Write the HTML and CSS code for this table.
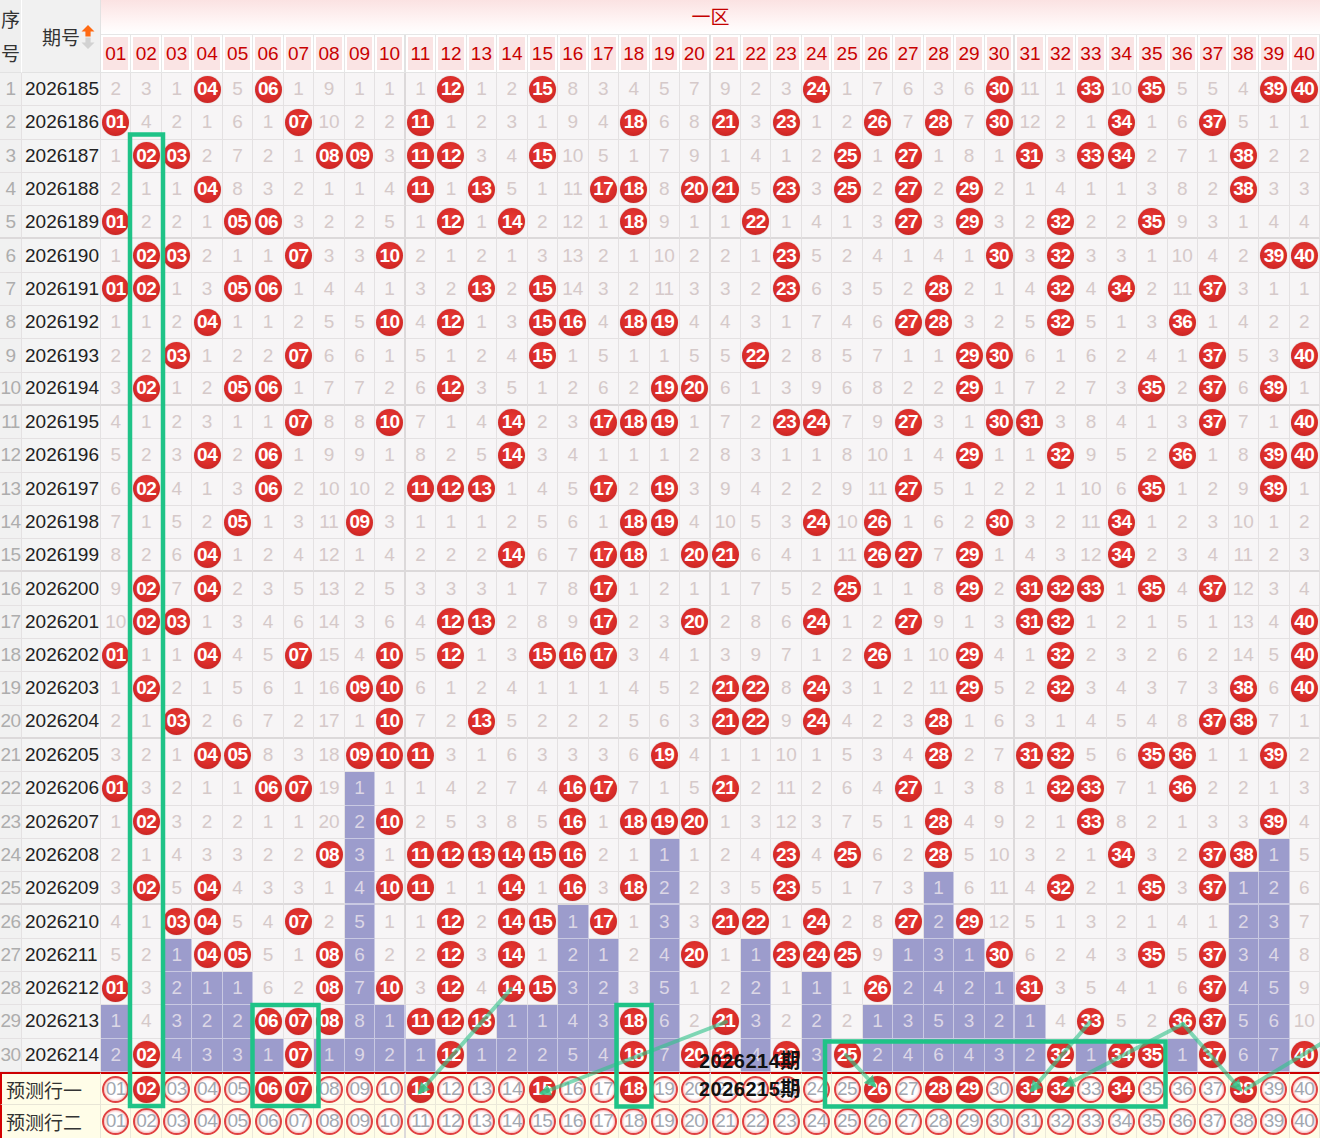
FILE: index.html
```html
<!DOCTYPE html>
<html lang="zh-CN">
<head>
<meta charset="utf-8">
<title>一区走势图</title>
<link rel="stylesheet" href="styles.css">
</head>
<body>
<div class="chart-wrap">
  <div class="chart" id="chart">
    <div class="h-seq"><span>序</span><span>号</span></div>
    <div class="h-issue">
      <span>期号</span>
      <svg class="sort-icon" width="14" height="24" viewBox="0 0 14 24" aria-hidden="true">
        <path d="M7 0 L13.5 6.5 L9.6 6.5 L9.6 11.5 L4.4 11.5 L4.4 6.5 L0.5 6.5 Z" fill="#ff6a13"/>
        <path d="M4.4 12.5 L9.6 12.5 L9.6 17.5 L13.5 17.5 L7 24 L0.5 17.5 L4.4 17.5 Z" fill="#d2d2d2"/>
      </svg>
    </div>
    <div class="h-zone">一区</div>
    <div class="hnum">01</div><div class="hnum">02</div><div class="hnum">03</div><div class="hnum">04</div><div class="hnum">05</div>
    <div class="hnum">06</div><div class="hnum">07</div><div class="hnum">08</div><div class="hnum">09</div><div class="hnum gsep">10</div>
    <div class="hnum">11</div><div class="hnum">12</div><div class="hnum">13</div><div class="hnum">14</div><div class="hnum">15</div>
    <div class="hnum">16</div><div class="hnum">17</div><div class="hnum">18</div><div class="hnum">19</div><div class="hnum gsep">20</div>
    <div class="hnum">21</div><div class="hnum">22</div><div class="hnum">23</div><div class="hnum">24</div><div class="hnum">25</div>
    <div class="hnum">26</div><div class="hnum">27</div><div class="hnum">28</div><div class="hnum">29</div><div class="hnum gsep">30</div>
    <div class="hnum">31</div><div class="hnum">32</div><div class="hnum">33</div><div class="hnum">34</div><div class="hnum">35</div>
    <div class="hnum">36</div><div class="hnum">37</div><div class="hnum">38</div><div class="hnum">39</div><div class="hnum">40</div>
  </div>

  <svg class="overlay" width="1320" height="1138" viewBox="0 0 1320 1138" aria-hidden="true">
    <defs>
      <marker id="ah" viewBox="0 0 10 10" refX="7" refY="5" markerWidth="3" markerHeight="3" orient="auto">
        <path d="M0,0 L10,5 L0,10 Z" fill="rgba(52,196,138,0.8)"/>
      </marker>
    </defs>
    <g class="trend">
      <line x1="511" y1="989" x2="420" y2="1092" marker-end="url(#ah)"/>
      <line x1="726" y1="1022" x2="542" y2="1093" marker-end="url(#ah)"/>
      <line x1="846" y1="1055" x2="874" y2="1085" marker-end="url(#ah)"/>
      <line x1="1090" y1="1022" x2="1032" y2="1090" marker-end="url(#ah)"/>
      <line x1="1183" y1="1024" x2="1066" y2="1085" marker-end="url(#ah)"/>
      <line x1="1183" y1="1024" x2="1240" y2="1089" marker-end="url(#ah)"/>
      <line x1="1246" y1="1089" x2="1324" y2="1042"/>
    </g>
    <g class="boxes">
      <rect x="130" y="134.5" width="33" height="971.5"/>
      <rect x="252.5" y="1005" width="66" height="101"/>
      <rect x="616.5" y="1005" width="35" height="101.5"/>
      <rect x="825" y="1041.5" width="340.5" height="65"/>
    </g>
  </svg>

  <div class="issue-tags">
    <span>2026214期</span>
    <span>2026215期</span>
  </div>
</div>
<script src="script.js"></script>
</body>
</html>
```

FILE: styles.css
```css
* {
  box-sizing: border-box;
}

body {
  margin: 0;
  background: #ffffff;
  font-family: "Liberation Sans", Arial, "Noto Sans CJK SC", sans-serif;
}

.chart-wrap {
  position: relative;
  width: 1320px;
  height: 1138px;
  overflow: hidden;
}

.chart {
  display: grid;
  grid-template-columns: 22px 79px repeat(40, minmax(0, 1fr));
  grid-template-rows: 35px 38px;
  grid-auto-rows: 33.3px;
  width: 1320px;
}

/* ---------- header ---------- */
.h-seq {
  grid-column: 1;
  grid-row: 1 / span 2;
  display: flex;
  flex-direction: column;
  align-items: center;
  justify-content: center;
  background: #efefef;
  border-right: 1px solid #ffffff;
  border-bottom: 1px solid #e2e2e2;
  font-family: "Noto Sans CJK SC", sans-serif;
  font-size: 19px;
  line-height: 34px;
  color: #333333;
}

.h-issue {
  grid-column: 2;
  grid-row: 1 / span 2;
  display: flex;
  align-items: center;
  padding-left: 20px;
  gap: 1px;
  background: #f1f1f1;
  border-right: 1px solid #e2e2e2;
  border-bottom: 1px solid #e2e2e2;
  font-family: "Noto Sans CJK SC", sans-serif;
  font-size: 19px;
  color: #333333;
}

.sort-icon {
  flex: none;
  margin-top: 2px;
}

.h-zone {
  grid-column: 3 / span 40;
  grid-row: 1;
  display: flex;
  justify-content: center;
  align-items: flex-start;
  padding-top: 2px;
  background: linear-gradient(#fbe2e2, #fff7f7 70%, #ffffff);
  border-bottom: 1px solid #e6e6e6;
  font-family: "Noto Sans CJK SC", sans-serif;
  font-size: 19px;
  color: #c40000;
}

.hnum {
  display: flex;
  align-items: center;
  justify-content: center;
  background: #fae4e4;
  box-shadow: inset 0 0 0 2px #ffffff;
  border-right: 1px solid #e6e6e6;
  border-bottom: 1px solid #e4e4e4;
  font-size: 19px;
  color: #c80000;
}

.hnum.gsep {
  border-right: 2px solid #e2e2e2;
}

/* ---------- body cells ---------- */
.c {
  display: flex;
  align-items: center;
  justify-content: center;
  border-right: 1px solid #e4e1e2;
  border-bottom: 1px solid #e4e1e2;
  font-size: 19px;
  white-space: nowrap;
}

.c.gend {
  border-bottom: 2px solid #dcd9da;
}

.c.gsep {
  border-right: 2px solid #dcd9da;
}

.seq {
  background: #f1f1f1;
  color: #adadad;
  letter-spacing: -0.5px;
}

.issue {
  justify-content: flex-start;
  padding-left: 3px;
  background: #f4f4f4;
  color: #222222;
}

.cell {
  background: #f7f5f6;
  color: #d5c9c9;
}

.cell.gap {
  background: #9c9ccc;
  color: #dcd7e6;
  border-right-color: #c9c9e2;
  border-bottom-color: #c9c9e2;
}

.ball {
  flex: none;
  width: 27px;
  height: 27px;
  border-radius: 50%;
  display: flex;
  align-items: center;
  justify-content: center;
  background: radial-gradient(circle at 50% 42%, #e83b36 0%, #d92c29 55%, #b91e1e 100%);
  box-shadow: 0 0 1px rgba(110, 0, 0, 0.5);
  color: #ffffff;
  font-weight: bold;
  font-size: 19px;
  letter-spacing: -0.5px;
}

/* ---------- prediction rows ---------- */
.plabel {
  grid-column: span 2;
  justify-content: flex-start;
  padding-left: 4px;
  background: #fffde8;
  border-left: 2px solid #d40000;
  border-right-color: #e8e5d6;
  border-bottom-color: #e8e5d6;
  font-family: "Noto Sans CJK SC", sans-serif;
  color: #333333;
}

.pcell {
  background: #fffde8;
  border-right-color: #ebe8d9;
  border-bottom-color: #ebe8d9;
}

.prow1 {
  border-top: 2px solid #cc0000;
}

.ring {
  flex: none;
  width: 27px;
  height: 27px;
  border-radius: 50%;
  display: flex;
  align-items: center;
  justify-content: center;
  background: #ffffff;
  border: 2px solid #e04141;
  box-shadow: inset 0 0 2px 1px #f6bcbc;
  color: #a2a7b0;
  font-size: 19px;
  letter-spacing: -0.5px;
}

/* ---------- overlay ---------- */
.overlay {
  position: absolute;
  left: 0;
  top: 0;
  pointer-events: none;
}

.trend line {
  stroke: rgba(52, 196, 138, 0.62);
  stroke-width: 4;
  stroke-linecap: round;
}

.boxes rect {
  fill: none;
  stroke: #1fc387;
  stroke-width: 4.5;
}

.issue-tags {
  position: absolute;
  left: 699px;
  top: 1047px;
  display: flex;
  flex-direction: column;
  font-family: "Liberation Sans", Arial, "Noto Sans CJK SC", sans-serif;
  font-size: 20px;
  font-weight: bold;
  line-height: 28px;
  letter-spacing: 0.5px;
  color: #111111;
  pointer-events: none;
}
```

FILE: script.js
```js
(function () {
  var chart = document.getElementById('chart');
  var N = 40;
  var START = 2026185;

  // omission values of the first row (0 = drawn)
  var init = [2,3,1,0,5,0,1,9,1,1, 1,0,1,2,0,8,3,4,5,7, 9,2,3,0,1,7,6,3,6,0, 11,1,0,10,0,5,5,4,0,0];

  var hits = [
    [4,6,12,15,24,30,33,35,39,40],
    [1,7,11,18,21,23,26,28,30,34,37],
    [2,3,8,9,11,12,15,25,27,31,33,34,38],
    [4,11,13,17,18,20,21,23,25,27,29,38],
    [1,5,6,12,14,18,22,27,29,32,35],
    [2,3,7,10,23,30,32,39,40],
    [1,2,5,6,13,15,23,28,32,34,37],
    [4,10,12,15,16,18,19,27,28,32,36],
    [3,7,15,22,29,30,37,40],
    [2,5,6,12,19,20,29,35,37,39],
    [7,10,14,17,18,19,23,24,27,30,31,37,40],
    [4,6,14,29,32,36,39,40],
    [2,6,11,12,13,17,19,27,35,39],
    [5,9,18,19,24,26,30,34],
    [4,14,17,18,20,21,26,27,29,34],
    [2,4,17,25,29,31,32,33,35,37],
    [2,3,12,13,17,20,24,27,31,32,40],
    [1,4,7,10,12,15,16,17,26,29,32,40],
    [2,9,10,21,22,24,29,32,38,40],
    [3,10,13,21,22,24,28,37,38],
    [4,5,9,10,11,19,28,31,32,35,36,39],
    [1,6,7,16,17,21,27,32,33,36],
    [2,10,16,18,19,20,28,33,39],
    [8,11,12,13,14,15,16,23,25,28,34,37,38],
    [2,4,10,11,14,16,18,23,32,35,37],
    [3,4,7,12,14,15,17,21,22,24,27,29],
    [4,5,8,12,14,20,23,24,25,30,35,37],
    [1,8,10,12,14,15,26,31,37],
    [6,7,8,11,12,13,18,21,33,36,37],
    [2,7,12,18,20,21,23,25,32,34,35,37,40]
  ];

  var pred1 = [2,6,7,11,15,18,26,28,29,31,32,34,38];

  function pad(n) { return (n < 10 ? '0' : '') + n; }

  function add(cls, text) {
    var d = document.createElement('div');
    d.className = cls;
    if (text !== undefined && text !== null) d.textContent = text;
    chart.appendChild(d);
    return d;
  }

  function token(cls, n) {
    var s = document.createElement('span');
    s.className = cls;
    s.textContent = pad(n);
    return s;
  }

  var last = [];
  for (var i = 0; i <= N; i++) last.push(-1);
  hits.forEach(function (h, r) { h.forEach(function (n) { last[n] = r; }); });

  var cur = [];
  for (var j = 0; j <= N; j++) cur.push(0);

  hits.forEach(function (h, r) {
    var grp = (r % 5 === 4 && r < hits.length - 1) ? ' gend' : '';
    add('c seq' + grp, r + 1);
    add('c issue' + grp, START + r);
    for (var c = 1; c <= N; c++) {
      var cls = 'c cell' + grp + ((c % 10 === 0 && c < N) ? ' gsep' : '');
      if (h.indexOf(c) !== -1) {
        cur[c] = 0;
        add(cls).appendChild(token('ball', c));
      } else {
        cur[c] = (r === 0) ? init[c - 1] : cur[c] + 1;
        if (r > last[c]) cls += ' gap';
        add(cls, cur[c]);
      }
    }
  });

  // prediction rows
  [['预测行一', pred1, ' prow1'], ['预测行二', [], '']].forEach(function (p) {
    add('c plabel' + p[2], p[0]);
    for (var c = 1; c <= N; c++) {
      var cls = 'c pcell' + p[2] + ((c % 10 === 0 && c < N) ? ' gsep' : '');
      var cell = add(cls);
      cell.appendChild(token(p[1].indexOf(c) !== -1 ? 'ball' : 'ring', c));
    }
  });
})();
```
